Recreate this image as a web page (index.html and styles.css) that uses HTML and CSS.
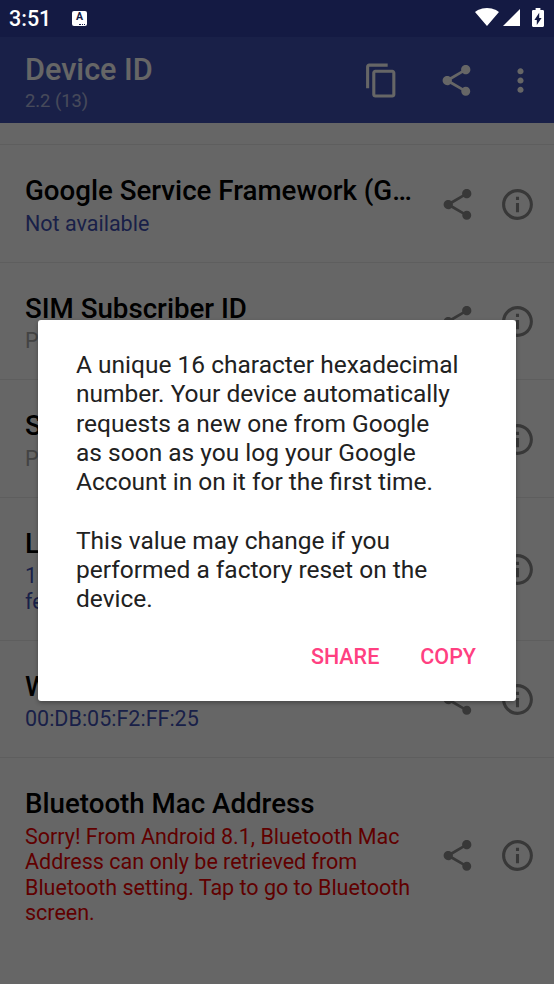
FILE: index.html
```html
<!DOCTYPE html>
<html lang="en">
<head>
<meta charset="utf-8">
<title>Device ID</title>
<link rel="stylesheet" href="styles.css">
</head>
<body>
<svg class="defs" width="0" height="0" aria-hidden="true">
  <symbol id="i-share" viewBox="0 0 24 24"><path d="M18 16.08c-.76 0-1.44.3-1.96.77L8.91 12.7c.05-.23.09-.46.09-.7s-.04-.47-.09-.7l7.05-4.11c.54.5 1.25.81 2.04.81 1.66 0 3-1.34 3-3s-1.34-3-3-3-3 1.34-3 3c0 .24.04.47.09.7L8.04 9.81C7.5 9.31 6.79 9 6 9c-1.66 0-3 1.34-3 3s1.34 3 3 3c.79 0 1.5-.31 2.04-.81l7.12 4.16c-.05.21-.08.43-.08.65 0 1.61 1.31 2.92 2.92 2.92 1.61 0 2.92-1.31 2.92-2.92s-1.31-2.92-2.92-2.92z"/></symbol>
  <symbol id="i-info" viewBox="0 0 24 24"><path d="M11 7h2v2h-2zm0 4h2v6h-2zm1-9C6.48 2 2 6.48 2 12s4.48 10 10 10 10-4.48 10-10S17.52 2 12 2zm0 18c-4.41 0-8-3.59-8-8s3.59-8 8-8 8 3.59 8 8-3.59 8-8 8z"/></symbol>
</svg>
<div class="screen">
  <header class="status">
    <span class="clock">3:51</span>
    <span class="a-badge"><span class="a-letter">A</span><span class="a-dots"></span></span>
    <span class="status-right">
      <svg class="st-wifi" viewBox="0.36 3 23.3 18.5" preserveAspectRatio="none"><path d="M12.01 21.49L23.64 7c-.45-.34-4.93-4-11.64-4C5.28 3 .81 6.66.36 7l11.63 14.49.01.01.01-.01z"/></svg>
      <svg class="st-signal" viewBox="0 0 20 20" preserveAspectRatio="none"><path d="M0 20h20V0z"/></svg>
      <svg class="st-batt" viewBox="0 0 10 20" preserveAspectRatio="none"><path d="M8.7 2H7V0H3v2H1.3C.6 2 0 2.6 0 3.3v15.4C0 19.4.6 20 1.3 20h7.4c.7 0 1.3-.6 1.3-1.3V3.3C10 2.6 9.4 2 8.7 2zM4 18v-5.5H2L6 5v5.5h2L4 18z"/></svg>
    </span>
  </header>
  <div class="appbar">
    <div class="appbar-title">
      <div class="app-name">Device ID</div>
      <div class="app-ver">2.2 (13)</div>
    </div>
    <svg class="bar-icon bar-copy" viewBox="0 0 24 24"><path d="M16 1H4c-1.1 0-2 .9-2 2v14h2V3h12V1zm3 4H8c-1.1 0-2 .9-2 2v14c0 1.1.9 2 2 2h11c1.1 0 2-.9 2-2V7c0-1.1-.9-2-2-2zm0 16H8V7h11v14z"/></svg>
    <svg class="bar-icon bar-share"><use href="#i-share"/></svg>
    <svg class="bar-icon bar-more" viewBox="0 0 24 24"><path d="M12 8c1.1 0 2-.9 2-2s-.9-2-2-2-2 .9-2 2 .9 2 2 2zm0 2c-1.1 0-2 .9-2 2s.9 2 2 2 2-.9 2-2-.9-2-2-2zm0 6c-1.1 0-2 .9-2 2s.9 2 2 2 2-.9 2-2-.9-2-2-2z"/></svg>
  </div>
  <main class="list">
    <div class="row-stub"></div>
    <section class="row">
      <div class="row-text">
        <h2 class="row-title">Google Service Framework (G…</h2>
        <p class="row-value">Not available</p>
      </div>
      <svg class="row-icon"><use href="#i-share"/></svg>
      <svg class="row-icon"><use href="#i-info"/></svg>
    </section>
    <section class="row">
      <div class="row-text">
        <h2 class="row-title">SIM Subscriber ID</h2>
        <p class="row-value muted">Permission needed</p>
      </div>
      <svg class="row-icon"><use href="#i-share"/></svg>
      <svg class="row-icon"><use href="#i-info"/></svg>
    </section>
    <section class="row">
      <div class="row-text">
        <h2 class="row-title">SIM Serial Number</h2>
        <p class="row-value muted">Permission needed</p>
      </div>
      <svg class="row-icon"><use href="#i-share"/></svg>
      <svg class="row-icon"><use href="#i-info"/></svg>
    </section>
    <section class="row">
      <div class="row-text">
        <h2 class="row-title">Local IP Address</h2>
        <p class="row-value">192.168.1.20<br>fe80::2db:5ff:fef2:ff25</p>
      </div>
      <svg class="row-icon"><use href="#i-share"/></svg>
      <svg class="row-icon"><use href="#i-info"/></svg>
    </section>
    <section class="row">
      <div class="row-text">
        <h2 class="row-title">Wi-Fi Mac Address</h2>
        <p class="row-value">00:DB:05:F2:FF:25</p>
      </div>
      <svg class="row-icon"><use href="#i-share"/></svg>
      <svg class="row-icon"><use href="#i-info"/></svg>
    </section>
    <section class="row row-last">
      <div class="row-text">
        <h2 class="row-title">Bluetooth Mac Address</h2>
        <p class="row-value error">Sorry! From Android 8.1, Bluetooth Mac Address can only be retrieved from Bluetooth setting. Tap to go to Bluetooth screen.</p>
      </div>
      <svg class="row-icon"><use href="#i-share"/></svg>
      <svg class="row-icon"><use href="#i-info"/></svg>
    </section>
  </main>
  <div class="scrim">
    <div class="dialog">
      <p class="dialog-text">A unique 16 character hexadecimal number. Your device automatically requests a new one from Google as soon as you log your Google Account in on it for the first time.</p>
      <p class="dialog-text">This value may change if you performed a factory reset on the device.</p>
      <div class="dialog-actions">
        <span class="dialog-btn">SHARE</span>
        <span class="dialog-btn">COPY</span>
      </div>
    </div>
  </div>
</div>
</body>
</html>
```
FILE: styles.css
```css
* { box-sizing: border-box; }
html, body { margin: 0; padding: 0; }
body { width: 554px; height: 984px; overflow: hidden; font-family: Roboto, "Liberation Sans", sans-serif; background: #fff; }
.defs { position: absolute; }
.screen { position: relative; width: 554px; height: 984px; overflow: hidden; display: flex; flex-direction: column; background: #fff; }

.status { flex: 0 0 37px; background: #141a43; color: #fff; display: flex; align-items: center; padding: 0 10px 0 9px; }
.clock { font-size: 21.5px; font-weight: 500; width: 63px; }
.a-badge { width: 15px; height: 15px; background: #fff; border-radius: 2px; display: flex; flex-direction: column; align-items: center; color: #141a43; position: relative; }
.a-letter { font-size: 10.5px; font-weight: 700; line-height: 12px; }
.a-dots { position: absolute; right: 2px; bottom: 1px; width: 6px; border-bottom: 1px dotted #141a43; }
.status-right { margin-left: auto; margin-bottom: 2px; display: flex; align-items: flex-end; fill: #fff; }
.st-wifi { width: 24px; height: 18px; margin-right: 4px; margin-bottom: 1px; }
.st-signal { width: 17px; height: 17px; margin-right: 12px; margin-bottom: 1px; }
.st-batt { width: 12px; height: 19px; }

.appbar { flex: 0 0 86px; background: #3f51b5; display: flex; align-items: center; padding: 0 15px 0 25px; fill: #fff; }
.appbar-title { flex: 1; color: #fff; padding-top: 4px; }
.app-name { font-size: 30.6px; font-weight: 500; line-height: 38px; margin-top: -1px; }
.app-ver { font-size: 18.3px; line-height: 24px; opacity: .6; }
.bar-icon { flex: none; width: 37px; height: 37px; }
.bar-share { margin-left: 38px; }
.bar-more { margin-left: 27px; }

.list { flex: 1; overflow: hidden; background: #fff; }
.row-stub { height: 22.4px; border-bottom: 1px solid #ebebeb; }
.row { display: flex; align-items: center; padding: 26.75px 18px 25.75px 25px; border-bottom: 1px solid #ebebeb; fill: #8c8c8c; }
.row-last { border-bottom: 0; padding-bottom: 23px; }
.row-text { flex: 1; min-width: 0; padding-right: 24px; }
.row-title { margin: 0; font-size: 27.7px; font-weight: 500; line-height: 38.5px; color: #000; white-space: nowrap; }
.row-value { margin: 0; font-size: 21.5px; line-height: 25.5px; color: #3f51b5; }
.row-value.muted { color: #a8a8a8; }
.row-value.error { color: #f00000; }
.row-icon { flex: none; width: 37px; height: 37px; }
.row-icon + .row-icon { margin-left: 23px; }

.scrim { position: absolute; inset: 37px 0 0; background: rgba(0, 0, 0, .6); display: flex; align-items: center; justify-content: center; }
.dialog { width: 478px; height: 381px; background: #fff; border-radius: 3px; padding: 30px 56px 0 38px; box-shadow: 0 2px 4px rgba(0,0,0,.3); }
.dialog-text { margin: 0 0 29.3px; font-size: 24.5px; line-height: 29.3px; color: #212121; }
.dialog-actions { display: flex; justify-content: flex-end; gap: 41px; margin-right: -16px; margin-top: 20px; }
.dialog-btn { font-size: 21.5px; font-weight: 500; line-height: 28px; color: #ff4081; }
```
